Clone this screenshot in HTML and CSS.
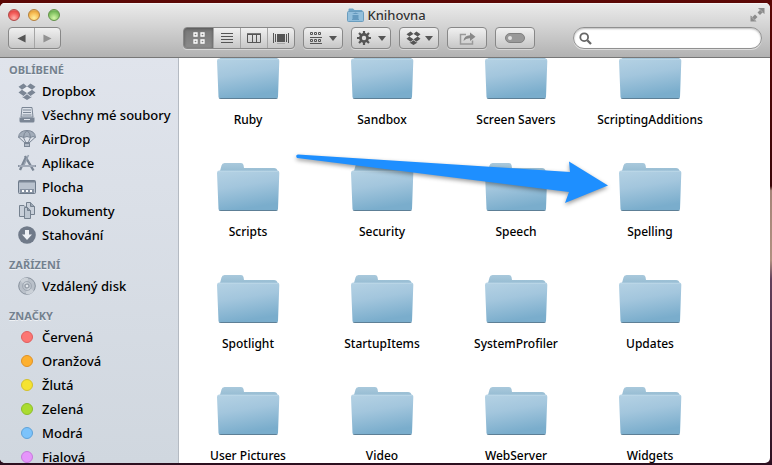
FILE: index.html
```html
<!DOCTYPE html>
<html lang="cs">
<head>
<meta charset="utf-8">
<title>Knihovna</title>
<link rel="stylesheet" href="styles.css">
</head>
<body>
<svg class="defs" width="0" height="0" aria-hidden="true">
  <defs>
    <linearGradient id="front" x1="0" y1="0" x2="0.25" y2="1">
      <stop offset="0" stop-color="#b5d2e4"/><stop offset="0.45" stop-color="#a3c6dd"/><stop offset="1" stop-color="#7aadcc"/>
    </linearGradient>
    <linearGradient id="back" x1="0" y1="0" x2="0" y2="1">
      <stop offset="0" stop-color="#a9c9dc"/><stop offset="0.5" stop-color="#94bad1"/><stop offset="1" stop-color="#7ba7c3"/>
    </linearGradient>
    <symbol id="folder" viewBox="0 0 64 50">
      <path d="M4 9 L5.500 3.500 Q6 1 8.500 1 H25 Q27 1 27.500 3 L28 6 H58 Q61 6 61.500 9 V20 H4z" fill="url(#back)"/>
      <path d="M3 8.500 H61 Q63.500 8.500 63.300 11 L62 47 Q62 48.500 60 48.500 H4.500 Q2.500 48.500 2.500 47 L1 11 Q1 8.500 3 8.500z" fill="url(#front)"/>
      <path d="M2 10 Q2.300 9.500 3 9.500 H61 Q62 9.500 62.500 10" fill="none" stroke="#bdd8e8" stroke-width=".7"/>
      <path d="M2.700 48 Q3.500 49 5 49 H59.500 Q61.500 49 61.700 48z" fill="#5d7f96"/>
    </symbol>
    <symbol id="dropbox" viewBox="0 0 18 17">
      <path d="M5.500 .500 L9 3.500 L4 6.700 L.500 3.800z M12.500 .500 L17.500 3.800 L14 6.700 L9 3.500z M.500 9.500 L4 6.700 L9 10 L5.500 13z M17.500 9.500 L14 6.700 L9 10 L12.500 13z M4.500 13.500 L5.500 14 L9 11.200 L12.500 14 L13.500 13.500 V14.300 L9 17 L4.500 14.300z" fill="currentColor"/>
      <path d="M4 6.700 L9 3.500 L14 6.700 L9 10z" fill="#fff" opacity=".35"/>
    </symbol>
  </defs>
</svg>

<main class="window">
  <header class="bar">
    <div class="titlebar">
      <div class="lights">
        <button class="light close" aria-label="Zavřít"></button>
        <button class="light minimize" aria-label="Minimalizovat"></button>
        <button class="light maximize" aria-label="Zvětšit"></button>
      </div>
      <h1 class="title">
        <svg width="17" height="14" viewBox="0 0 17 14"><path d="M1.500 4 V1.500 Q1.500 .500 2.500 .500 H6 L7.500 2 H14.500 Q15.500 2 15.500 3 V4z" fill="#6fa5c8"/><rect x=".5" y="3.500" width="16" height="10" rx="1" fill="#93bfdc" stroke="#6a9dbe"/><path d="M5 6 L8.500 4.500 L12 6z M5.500 7 H11.500 V11 H5.500z M5 11 H12 V12 H5z" fill="#659abf"/></svg>
        Knihovna
      </h1>
      <button class="fullscreen" aria-label="Celá obrazovka">
        <svg width="15" height="16" viewBox="0 0 15 16"><path d="M8 1 H14.500 V7 L12.500 5.500 L10 8 L7.500 5.500 L10 3z M.500 8.500 L2.500 10 L5 7.500 L7.500 10 L5 12.500 L6.500 14.500 H.500z" fill="#8b8b8b"/><path d="M9 1.500 L13 5.500 M1.500 10 L5.500 14" stroke="#c8c8c8" stroke-width=".6"/></svg>
      </button>
    </div>
    <div class="toolbar">
      <nav class="history">
        <div class="group">
          <button class="seg" aria-label="Zpět"><svg width="9" height="9" viewBox="0 0 10 10"><path d="M.500 5 L9.500 .500 V9.500z" fill="#555"/></svg></button>
          <button class="seg" aria-label="Vpřed"><svg width="9" height="9" viewBox="0 0 10 10"><path d="M9.500 5 L.500 .500 V9.500z" fill="#929292"/></svg></button>
        </div>
      </nav>
      <div class="group views">
        <button class="seg active" aria-label="Ikony"><svg width="12" height="12" viewBox="0 0 12 12" fill="none" stroke="#fff" stroke-width="1.300"><path d="M1 1H4V4H1z M8 1H11V4H8z M1 8H4V11H1z M8 8H11V11H8z"/></svg></button>
        <button class="seg" aria-label="Seznam"><svg width="12" height="11" viewBox="0 0 12 11" stroke="#555"><path d="M0 .500H12 M0 3.500H12 M0 6.500H12 M0 9.500H12"/></svg></button>
        <button class="seg" aria-label="Sloupce"><svg width="14" height="11" viewBox="0 0 14 11" fill="none" stroke="#555"><path d="M.500 1.500H13.500V9.500H.500z M5.500 1V10 M9.500 1V10"/><path d="M0 1H14" stroke-width="1.500"/></svg></button>
        <button class="seg" aria-label="Cover Flow"><svg width="16" height="11" viewBox="0 0 16 11"><path d="M4 1H12V9H4z" fill="#555"/><path d="M.500 0V10 M2.500 1V9 M13.500 1V9 M15.500 0V10" stroke="#555"/><path d="M4 10.500H12" stroke="#aaa"/></svg></button>
      </div>
      <button class="tool" aria-label="Uspořádat"><svg width="12" height="12" viewBox="0 0 12 12" fill="none" stroke="#555"><path d="M.500 .500H2.500V2.500H.500z M4.500 .500H6.500V2.500H4.500z M8.500 .500H10.500V2.500H8.500z M0 5.500H12 M.500 7.500H2.500V9.500H.500z M4.500 7.500H6.500V9.500H4.500z M8.500 7.500H10.500V9.500H8.500z M0 11.500H12"/></svg><i class="caret"></i></button>
      <button class="tool" aria-label="Akce"><svg width="14" height="14" viewBox="-7 -7 14 14"><g stroke="#555" stroke-width="2.200"><path d="M0-7V7 M-7 0H7 M-5-5L5 5 M-5 5L5-5"/></g><circle r="4.900" fill="#555"/><circle r="2.200" fill="#dedede"/></svg><i class="caret"></i></button>
      <button class="tool dark" aria-label="Dropbox"><svg width="15" height="14"><use href="#dropbox"/></svg><i class="caret"></i></button>
      <button class="tool" aria-label="Sdílet"><svg width="17" height="13" viewBox="0 0 17 13"><path d="M7 2.500H1.500V12H13.500V8.500" fill="none" stroke="#999" stroke-width="1.500"/><path d="M4.500 9 Q5 3.500 11 3.300 V.500 L16.500 4.800 L11 9 V6.200 Q7 6 4.500 9z" fill="#888"/></svg></button>
      <button class="tool" aria-label="Štítky"><svg width="20" height="10" viewBox="0 0 20 10"><rect x=".5" y=".5" width="19" height="9" rx="4.500" fill="#999" stroke="#808080"/><circle cx="5" cy="5" r="2" fill="#e2e2e2"/></svg></button>
      <label class="search">
        <svg width="13" height="13" viewBox="0 0 13 13" fill="none" stroke="#666"><circle cx="5.200" cy="5.200" r="3.900" stroke-width="1.800"/><path d="M8.300 8.300 L12 12" stroke-width="2.300"/></svg>
        <input type="search" aria-label="Hledat">
      </label>
    </div>
  </header>

  <div class="body">
    <aside class="sidebar">
      <h2>OBLÍBENÉ</h2>
      <ul>
        <li><a href="#"><svg width="18" height="17"><use href="#dropbox"/></svg>Dropbox</a></li>
        <li><a href="#"><svg width="18" height="18" viewBox="0 0 18 18"><path d="M4 1.500H14L15 11H3z" fill="#dce1e9" stroke="#7b8695"/><path d="M5 4H13 M5 6.500H13 M4.500 9H13.500" stroke="#7b8695"/><path d="M1.500 11.500H16.500V15Q16.500 16.500 15 16.500H3Q1.500 16.500 1.500 15z" fill="#7b8695"/><path d="M6 13.500H12" stroke="#dce1e9"/></svg>Všechny mé soubory</a></li>
        <li><a href="#"><svg width="18" height="18" viewBox="0 0 18 18"><path d="M.500 7.500Q1 .500 9 .500T17.500 7.500Q15 5.500 12.500 7.500Q9 5.500 5.500 7.500Q3 5.500 .500 7.500z" fill="#a3adba" stroke="#7b8695"/><path d="M5.500 7.500Q5.500 3 9 .500Q12.500 3 12.500 7.500 M1 7.500L7 13 M17 7.500L11 13 M5.500 7.500L8 13 M12.500 7.500L10 13" fill="none" stroke="#7b8695"/><path d="M6 12H12V17H6z" fill="#7b8695"/><path d="M7 14H11V16H7z" fill="#b3bbc7"/></svg>AirDrop</a></li>
        <li><a href="#"><svg width="18" height="18" viewBox="0 0 18 18"><path d="M8 3L2 16 M7 2L15.500 16.500" stroke="#7b8695" stroke-width="2.400"/><path d="M10.500 1L6 11" stroke="#98a2b0" stroke-width="1.500"/><path d="M0 11H18V13H0z" fill="#8a94a3"/><path d="M1 12H17" stroke="#d0d6df" stroke-width=".7"/></svg>Aplikace</a></li>
        <li><a href="#"><svg width="18" height="16" viewBox="0 0 18 16"><rect x=".5" y="1.500" width="17" height="13" rx="1" fill="#b9c2ce" stroke="#6e7b8b"/><path d="M1 2.500H17" stroke="#7b8695" stroke-width="2"/><path d="M2 10H16V14H2z" fill="#8792a2"/><path d="M4 12H6 M8 12H10 M12 12H14" stroke="#fff" stroke-width="2"/></svg>Plocha</a></li>
        <li><a href="#"><svg width="18" height="18" viewBox="0 0 18 18" fill="#c9d0da" stroke="#75818f"><path d="M1.500 3.500H6L9 6.500V14.500H1.500z"/><path d="M8.500 .500H12.500L16.500 4.500V12.500H8.500z"/><path d="M12.500 .500V4.500H16.500" fill="#9aa5b3"/><path d="M6.500 5.500H9.500L12.500 8.500V16.500H6.500z" fill="#bdc6d1"/><path d="M9.500 5.500V8.500H12.500" fill="#8e99a8"/></svg>Dokumenty</a></li>
        <li><a href="#"><svg width="18" height="18" viewBox="0 0 18 18"><circle cx="9" cy="9" r="8.800" fill="#707a89"/><path d="M7 4H11V8.500H14L9 14L4 8.500H7z" fill="#edf0f5"/></svg>Stahování</a></li>
      </ul>
      <h2>ZAŘÍZENÍ</h2>
      <ul>
        <li><a href="#"><svg width="18" height="18" viewBox="0 0 18 18" stroke="#868f9b"><circle cx="9" cy="9" r="8.300" fill="#b9c0c9"/><path d="M9 9L2 4Q5 0 10 1z M9 9L16 14Q13 18 8 17z" fill="#cbd1d8" stroke="none"/><circle cx="9" cy="9" r="4.500" fill="none" stroke="#a0a8b3"/><circle cx="9" cy="9" r="2" fill="#e4e8ed"/></svg>Vzdálený disk</a></li>
      </ul>
      <h2>ZNAČKY</h2>
      <ul>
        <li><a href="#"><i class="dot red"></i>Červená</a></li>
        <li><a href="#"><i class="dot orange"></i>Oranžová</a></li>
        <li><a href="#"><i class="dot yellow"></i>Žlutá</a></li>
        <li><a href="#"><i class="dot green"></i>Zelená</a></li>
        <li><a href="#"><i class="dot blue"></i>Modrá</a></li>
        <li><a href="#"><i class="dot purple"></i>Fialová</a></li>
      </ul>
    </aside>

    <section class="content">
      <div class="files">
        <a class="file" href="#"><svg><use href="#folder"/></svg>Ruby</a>
        <a class="file" href="#"><svg><use href="#folder"/></svg>Sandbox</a>
        <a class="file" href="#"><svg><use href="#folder"/></svg>Screen Savers</a>
        <a class="file" href="#"><svg><use href="#folder"/></svg>ScriptingAdditions</a>
        <a class="file" href="#"><svg><use href="#folder"/></svg>Scripts</a>
        <a class="file" href="#"><svg><use href="#folder"/></svg>Security</a>
        <a class="file" href="#"><svg><use href="#folder"/></svg>Speech</a>
        <a class="file" href="#"><svg><use href="#folder"/></svg>Spelling</a>
        <a class="file" href="#"><svg><use href="#folder"/></svg>Spotlight</a>
        <a class="file" href="#"><svg><use href="#folder"/></svg>StartupItems</a>
        <a class="file" href="#"><svg><use href="#folder"/></svg>SystemProfiler</a>
        <a class="file" href="#"><svg><use href="#folder"/></svg>Updates</a>
        <a class="file" href="#"><svg><use href="#folder"/></svg>User Pictures</a>
        <a class="file" href="#"><svg><use href="#folder"/></svg>Video</a>
        <a class="file" href="#"><svg><use href="#folder"/></svg>WebServer</a>
        <a class="file" href="#"><svg><use href="#folder"/></svg>Widgets</a>
      </div>
      <svg class="arrow" width="320" height="56" viewBox="0 0 320 56" aria-hidden="true"><path d="M3 4.500 L275 22 L274 11.500 L313 35.500 L270 53 L274 42 L2 8 Q0 5 3 4.500z" fill="#1e8fff"/></svg>
    </section>
  </div>
</main>
</body>
</html>
```

FILE: styles.css
```css
* { box-sizing: border-box; }

body {
  margin: 0;
  height: 100vh;
  padding: 3px 2px 2px 0;
  overflow: hidden;
  background: linear-gradient(#5c0806 0, #3a0508 40%, #a58478 41%, #b09080 56%, #62405c 60%, #2c0f1f 100%);
  font: 500 13px/18px "Noto Sans", "Open Sans", sans-serif;
  color: #000;
}

.defs { position: absolute; }
a { color: inherit; text-decoration: none; }
button { margin: 0; padding: 0; border: 0; background: none; font: inherit; }

.window {
  display: flex;
  flex-direction: column;
  height: 100%;
  overflow: hidden;
  border-radius: 5px;
  background: #fff;
}

.bar {
  flex: none;
  border-bottom: 1px solid #777;
  background: linear-gradient(#ebebeb, #d5d5d5 40%, #b2b2b2);
  box-shadow: inset 0 1px #f5f5f5;
}

.titlebar {
  display: grid;
  grid-template-columns: 1fr auto 1fr;
  align-items: center;
  height: 24px;
  padding: 0 5px 0 8px;
}

.lights { display: flex; gap: 8px; }
.light {
  width: 12px;
  height: 12px;
  border: 1px solid #8a5550;
  border-radius: 50%;
}
.close { border-color: #b04a48; background: radial-gradient(circle at 50% 80%, #ffb3ab, #f4605d 50%, #e34a49 75%, #f9c5c2); }
.minimize { border-color: #b5803c; background: radial-gradient(circle at 50% 80%, #fff0a0, #f8bf58 50%, #e5a53f 75%, #fae6c0); }
.maximize { border-color: #629148; background: radial-gradient(circle at 50% 80%, #d5f7a8, #8ecb6c 50%, #6fb254 75%, #d8eec8); }

.title {
  display: flex;
  align-items: center;
  gap: 3px;
  margin: 0;
  font-size: 13px;
  font-weight: 500;
  line-height: 18px;
  color: #333;
  text-shadow: 0 1px #f2f2f2;
}
.fullscreen { display: flex; justify-self: end; }

.toolbar {
  display: flex;
  gap: 8px;
  padding: 0 8px 8px 0;
}
.history { flex: 0 0 175px; padding-left: 8px; }

.group, .tool {
  display: flex;
  height: 22px;
  border: 1px solid #888;
  border-radius: 4px;
  background: linear-gradient(#f0f0f0, #c7c7c7);
  box-shadow: 0 1px #d8d8d8;
}
.group { overflow: hidden; width: 53px; }
.views { flex: none; width: 112px; }

.seg {
  display: flex;
  flex: 1;
  align-items: center;
  justify-content: center;
}
.seg + .seg { border-left: 1px solid #a5a5a5; }
.views .active { flex: 0 0 29px; background: linear-gradient(#777, #8c8c8c); box-shadow: inset 0 1px 3px #555; }

.tool {
  flex: none;
  align-items: center;
  justify-content: center;
  gap: 7px;
  width: 40px;
}
.dark { color: #555; gap: 4px; }
.caret {
  border: solid transparent;
  border-width: 5px 4px 0;
  border-top-color: #555;
}

.search {
  display: flex;
  align-items: center;
  width: 189px;
  height: 22px;
  margin-left: auto;
  padding: 0 8px 0 5px;
  border: 1px solid #909090;
  border-radius: 11px;
  background: #fff;
  box-shadow: inset 0 1px 2px #bbb, 0 1px #dcdcdc;
}
.search input {
  flex: 1;
  min-width: 0;
  border: 0;
  outline: 0;
  background: none;
  font: inherit;
}

.body { display: flex; flex: 1; min-height: 0; }

.sidebar {
  flex: 0 0 179px;
  overflow: hidden;
  padding-top: 3px;
  border-right: 1px solid #b4bac2;
  background: linear-gradient(#e0e4ec, #d0d7df);
}
.sidebar h2 {
  margin: 0;
  padding-left: 9px;
  font-size: 11px;
  font-weight: 700;
  line-height: 18px;
  color: #74818f;
  text-shadow: 0 1px #eef1f5;
}
.sidebar ul { margin: 0 0 9px; padding: 0; list-style: none; }
.sidebar a {
  display: flex;
  align-items: center;
  gap: 6px;
  height: 24px;
  padding-left: 18px;
  color: #000;
  white-space: nowrap;
}
.sidebar svg { color: #7b8695; }

.dot {
  width: 12px;
  height: 12px;
  margin: 0 3px;
  border: 1px solid;
  border-radius: 50%;
}
.red { background: #fc7673; border-color: #df5f60; }
.orange { background: #fdb02f; border-color: #df9127; }
.yellow { background: #f5e332; border-color: #d3c12d; }
.green { background: #aadc30; border-color: #8dbd2b; }
.blue { background: #7cc3fb; border-color: #5fa2d8; }
.purple { background: #e695fb; border-color: #c67adb; }

.content { position: relative; flex: 1; overflow: hidden; }
.files {
  display: grid;
  grid-template-columns: repeat(auto-fill, 134px);
  row-gap: 33px;
  margin: -8px 0 0 2px;
}
.file {
  display: flex;
  flex-direction: column;
  align-items: center;
  gap: 11px;
  font-size: 12px;
  line-height: 18px;
}
.file svg { width: 64px; height: 50px; }

.arrow {
  position: absolute;
  top: 92px;
  left: 116px;
  filter: drop-shadow(0 2px 2px rgba(0, 0, 0, .4));
}
```
